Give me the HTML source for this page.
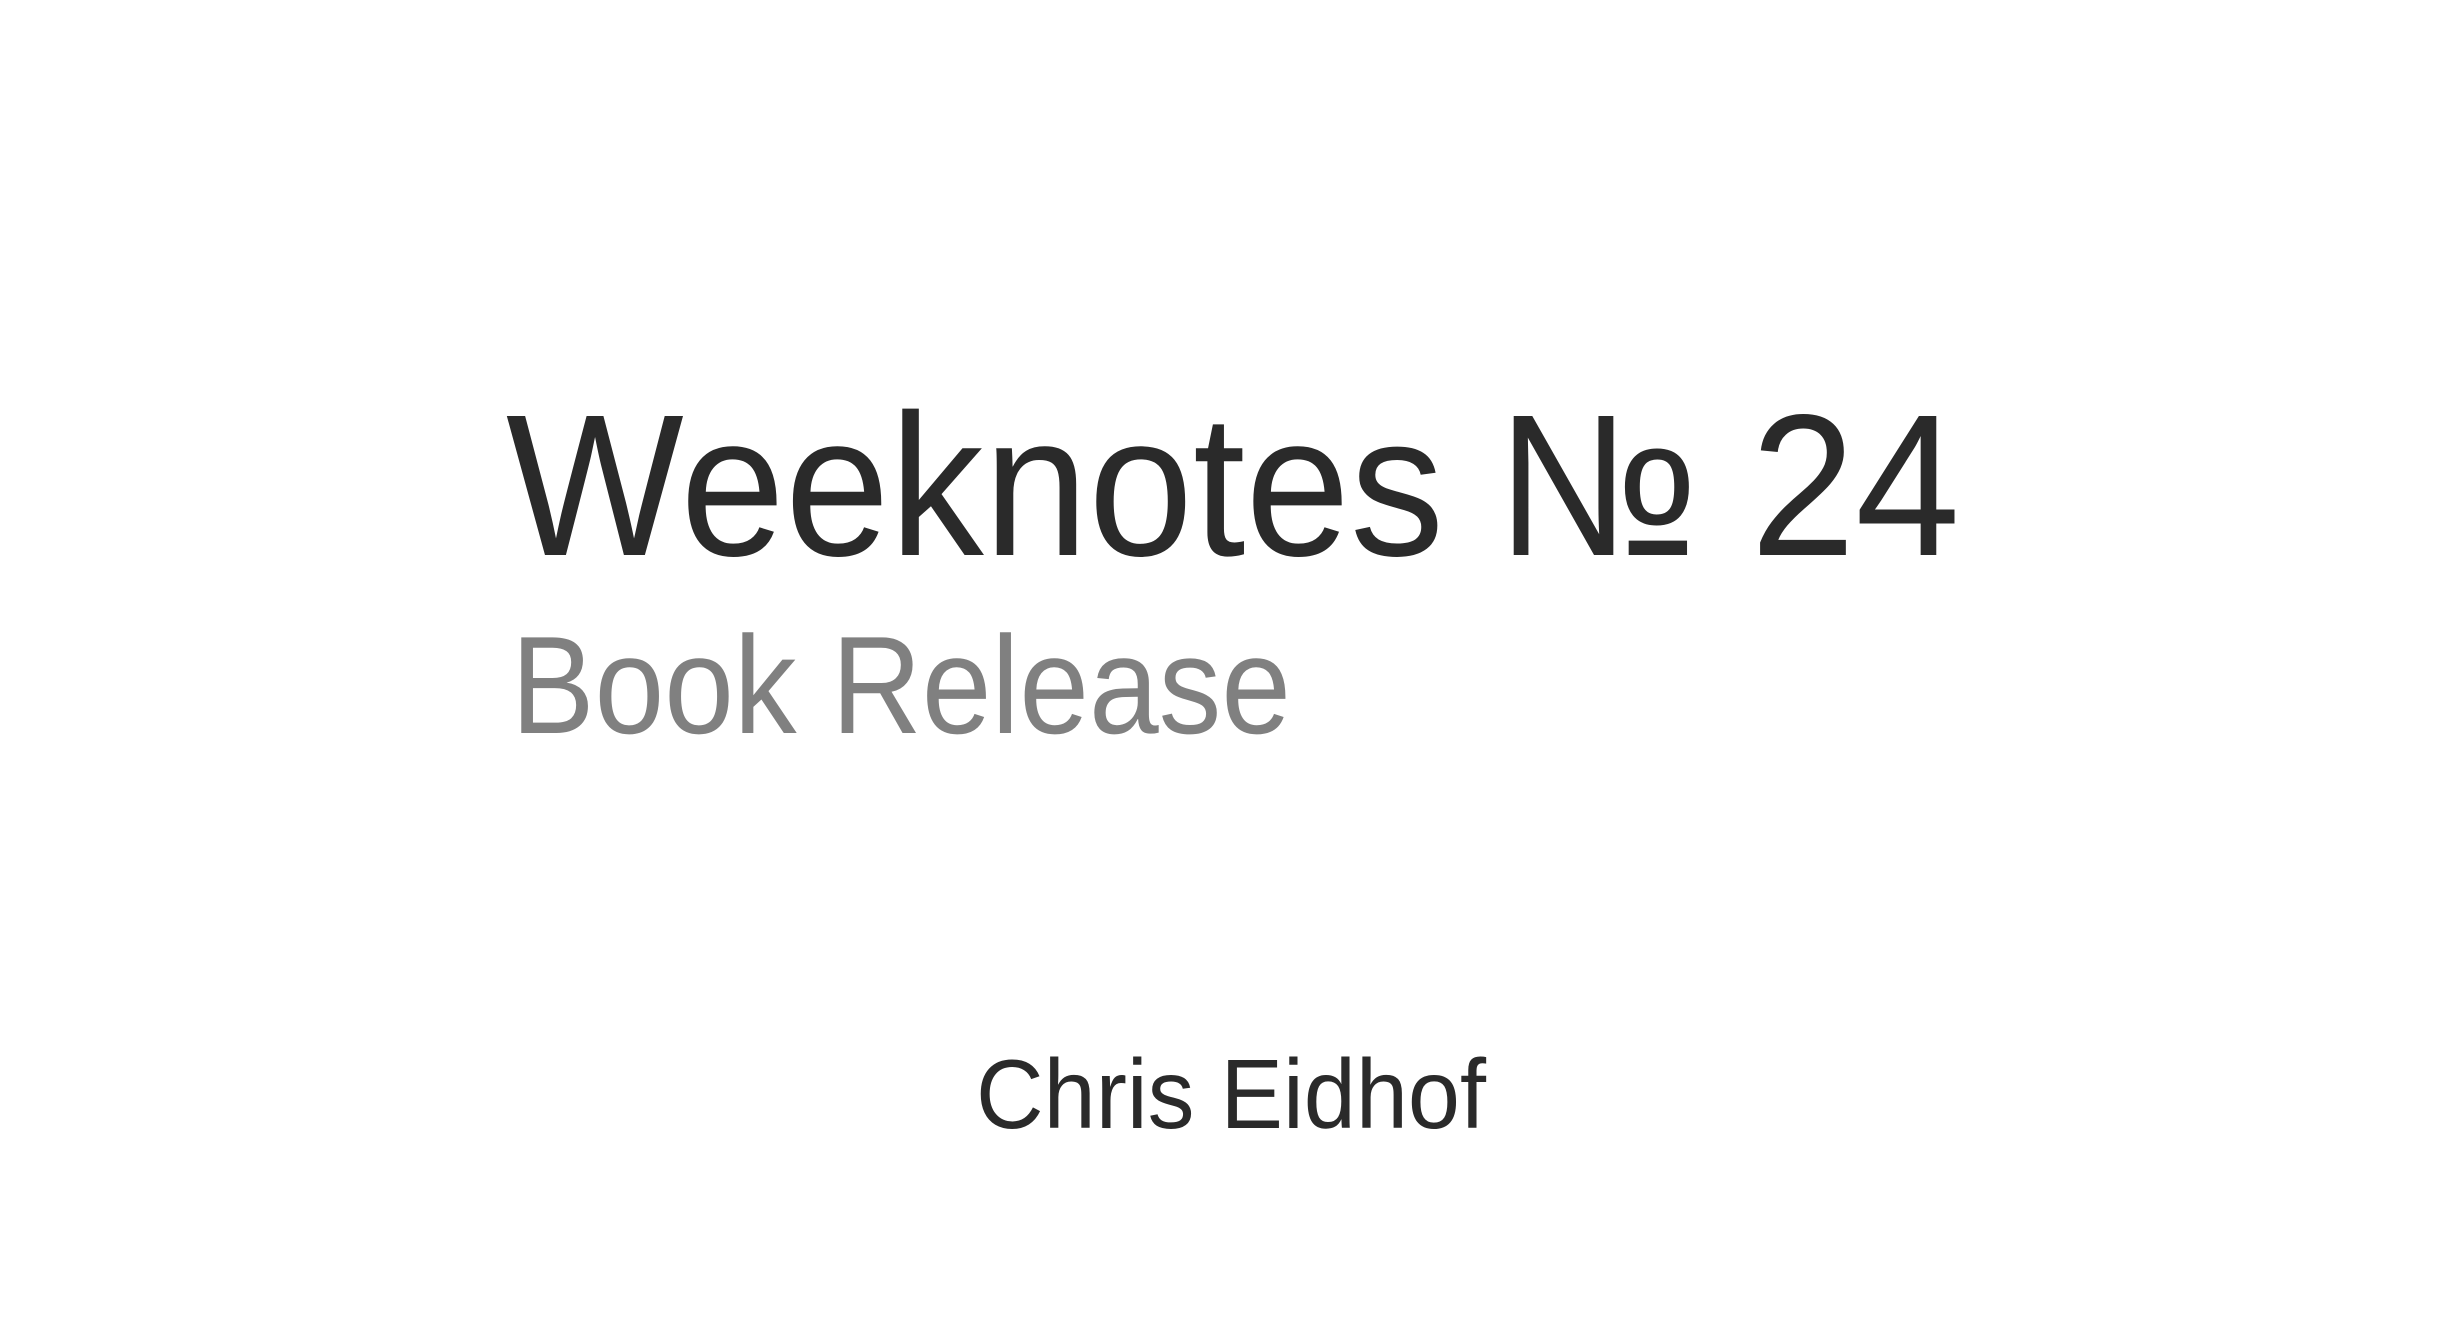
<!DOCTYPE html>
<html><head><meta charset="utf-8"><style>
html,body{margin:0;padding:0;background:#fff;width:2464px;height:1324px;overflow:hidden}
svg{display:block}
text{font-family:"Liberation Sans",sans-serif}
</style></head><body>
<svg width="2464" height="1324" viewBox="0 0 2464 1324" xmlns="http://www.w3.org/2000/svg">
<text x="506" y="555" font-size="202" fill="#2a2a2a" textLength="1454" lengthAdjust="spacingAndGlyphs">Weeknotes № 24</text>
<text x="511" y="733" font-size="139" fill="#808080" textLength="780" lengthAdjust="spacingAndGlyphs">Book Release</text>
<text x="976" y="1128" font-size="98" fill="#2a2a2a" textLength="510" lengthAdjust="spacingAndGlyphs">Chris Eidhof</text>
</svg>
</body></html>
